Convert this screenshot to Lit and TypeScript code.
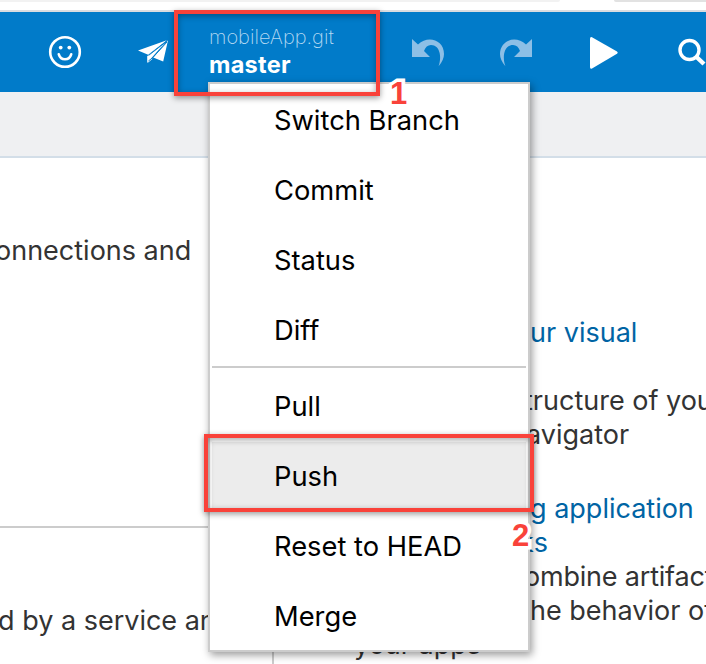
import { LitElement, html, css, svg } from "lit";
import { customElement } from "lit/decorators.js";

interface Item { label: string; active?: boolean; }

const GROUPS: Item[][] = [
  [{ label: "Switch Branch" }, { label: "Commit" }, { label: "Status" }, { label: "Diff" }],
  [{ label: "Pull" }, { label: "Push", active: true }, { label: "Reset to HEAD" }, { label: "Merge" }],
];

@customElement("app-root")
export class AppRoot extends LitElement {
  static styles = css`
    :host { display: block; position: relative; width: 706px; height: 664px; overflow: hidden; background: #fff;
      font-family: Inter, "Liberation Sans", sans-serif; font-size: 27px; line-height: 34px; color: #333; white-space: nowrap; }
    .tabs { height: 10px; display: flex; justify-content: space-between; border-bottom: 2px solid #d9dce0; }
    .tab { height: 2px; background: #f2f2f2; width: 560px; border-radius: 0 0 12px 0; }
    .tab.end { width: 92px; background: #e2e2e2; border-radius: 0 0 0 12px; }
    .bar { height: 80px; background: #017bc9; display: grid; color: #fff; }
    .bar > * { grid-area: 1 / 1; }
    .bar svg { display: block; width: 706px; height: 80px; }
    .branch { padding: 12px 0 0 209px; font-size: 20px; line-height: 27px; }
    .repo { font-weight: 200; color: #b5d9f2; }
    .name { font-weight: 700; font-size: 23.5px; letter-spacing: 0.25px; }
    .sub { height: 64px; background: #eff0f2; border-bottom: 2px solid #d3dee8; }
    .body { display: grid; grid-template-columns: 272px 1fr; height: 506px; }
    .cell { height: 370px; border-bottom: 2px solid #ccc; padding-top: 76px; box-sizing: border-box; }
    .cell span { margin-left: -5px; }
    .service { padding-top: 76px; margin-left: -2px; }
    .right { border-left: 2px solid #ccc; padding-top: 158px; }
    .line, .gap { height: 34px; }
    .gap.big { height: 40px; }
    .link { color: #0064a4; }
    .a { padding-left: 256px; } .b { padding-left: 250px; } .c { padding-left: 252px; }
    .d { padding-left: 245px; } .apps { padding-left: 80px; }
    .tight { letter-spacing: -0.2px; }
    .menu { position: absolute; left: 208px; top: 82px; width: 318px; height: 566px; border: 2px solid #ccc; background: #fff;
      box-shadow: 2px 3px 8px rgba(0,0,0,.4); color: #000; font-size: 27.3px; }
    .item { height: 70px; line-height: 70px; padding-left: 64px; }
    .group { padding-top: 2px; }
    .group + .group { border-top: 2px solid #ccc; margin: 0 2px; padding-top: 4px; }
    .group + .group .item { padding-left: 62px; }
    .item.active { background: #ececec; }
    .box { position: absolute; box-sizing: border-box; border: 4px solid #f9423a; box-shadow: 0 2px 6px rgba(0,0,0,.4), inset 0 2px 6px rgba(0,0,0,.35); }
    .one { left: 174px; top: 10px; width: 206px; height: 86px; }
    .two { left: 204px; top: 434px; width: 330px; height: 78px; }
    .num { position: absolute; font: 700 31px/34px "Liberation Sans", sans-serif; color: #f9423a; -webkit-text-stroke: 7px #fff; paint-order: stroke fill; stroke-linejoin: round; }
    .n1 { left: 390px; top: 77px; } .n2 { left: 512px; top: 519px; }
  `;

  icons() {
    return svg`
      <g fill="none" stroke="#fff" stroke-width="2.6" stroke-linecap="round">
        <circle cx="65" cy="40" r="14.8"/><path d="M58.8 42.3c2 6.6 10.4 6.6 12.4 0"/>
      </g>
      <circle cx="60.7" cy="35.6" r="1.9" fill="#fff"/><circle cx="69.3" cy="35.6" r="1.9" fill="#fff"/>
      <g fill="#fff">
        <path d="M138 38.6L166.8 28.2 148.2 42.7ZM168 28.2L163.2 49.6 153.2 45.4ZM147.4 44L152.6 46.8 147.6 51Z"/>
        <path d="M592 25.2L617 39.4Q618.6 40.5 617 41.7L592 56.5Q590 57.4 590 55V27Q590 24.4 592 25.2Z"/>
      </g>
      <path d="M165.5 30.2L147.4 44V50.6L151 46.4Z" fill="#fff"/>
      <path d="M166.5 29.4L148.6 43.4M167 30L153 45.4L148.4 49" fill="none" stroke="#017bc9" stroke-width="1"/>
      <g fill="#8dbfe6">
        <path d="M412 27L418 32.5C428 23 444 28 444 42Q444 48 438.6 54.2C442 45 440 33 431 33Q426 33 424 39L430 45H412Z"/>
        <path d="M532 27L526 32.5C516 23 500 28 500 42Q500 48 505.4 54.2C502 45 504 33 513 33Q518 33 520 39L514 45H532Z"/>
      </g>
      <g fill="none" stroke="#fff"><circle cx="689.5" cy="38" r="9.5" stroke-width="3.4"/><path d="M696.5 45L704 52" stroke-width="4.4"/></g>`;
  }

  render() {
    return html`
      <div class="tabs"><div class="tab"></div><div class="tab end"></div></div>
      <div class="bar">
        <svg viewBox="0 0 706 80">${this.icons()}</svg>
        <div class="branch"><div class="repo">mobileApp.git</div><div class="name">master</div></div>
      </div>
      <div class="sub"></div>
      <div class="body">
        <div class="left"><div class="cell"><span>onnections and</span></div><div class="service">d by a service and</div></div>
        <div class="right">
          <div class="line link a">ur visual</div><div class="gap"></div>
          <div class="line b">tructure of your</div><div class="line c">avigator</div><div class="gap big"></div>
          <div class="line link a">g application</div><div class="line link d">ks</div>
          <div class="line b tight">ombine artifacts</div><div class="line a">he behavior of</div><div class="line apps">your apps</div>
        </div>
      </div>
      <div class="menu">${GROUPS.map(g => html`<div class="group">${g.map(i => html`<div class="item ${i.active ? "active" : ""}">${i.label}</div>`)}</div>`)}</div>
      <div class="box one"></div><div class="box two"></div>
      <div class="num n1">1</div><div class="num n2">2</div>`;
  }
}
